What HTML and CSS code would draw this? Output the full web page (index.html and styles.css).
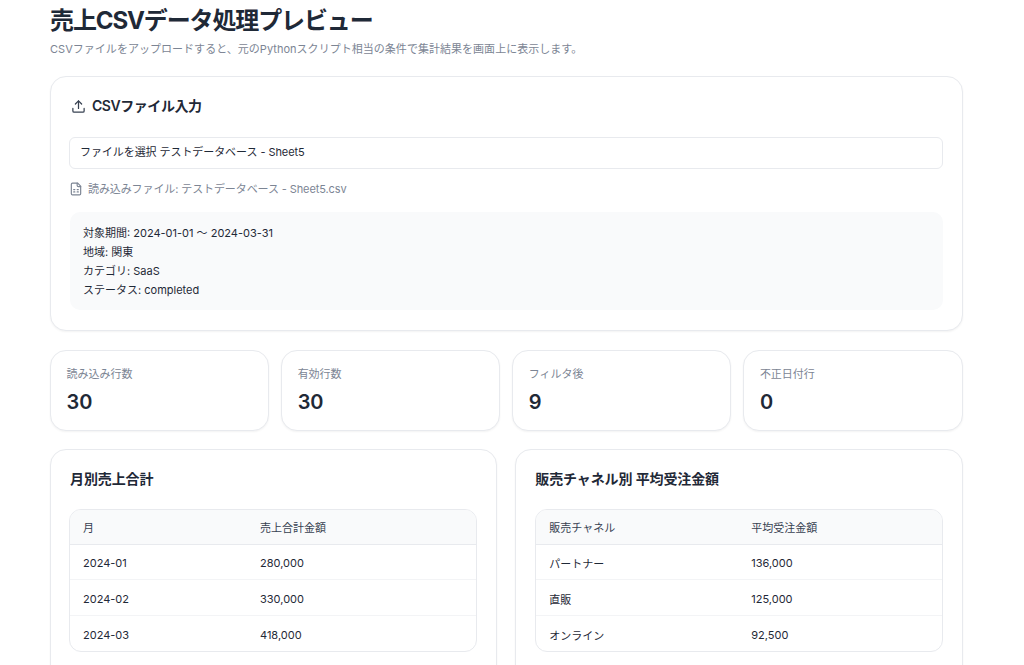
FILE: index.html
```
<!DOCTYPE html>
<html lang="ja">
<head>
<meta charset="utf-8">
<title>売上CSVデータ処理プレビュー</title>
<link rel="stylesheet" href="styles.css">
</head>
<body>
<main class="page">
  <header class="head">
    <h1 class="title">売上CSVデータ処理プレビュー</h1>
    <p class="subtitle">CSVファイルをアップロードすると、元のPythonスクリプト相当の条件で集計結果を画面上に表示します。</p>
  </header>

  <section class="card upload">
    <h2 class="card-title with-icon">
      <svg class="icon-upload" viewBox="0 0 24 24" fill="none" stroke="currentColor" stroke-width="2" stroke-linecap="round" stroke-linejoin="round"><path d="M21 15v4a2 2 0 0 1-2 2H5a2 2 0 0 1-2-2v-4"/><polyline points="17 8 12 3 7 8"/><line x1="12" y1="3" x2="12" y2="15"/></svg>
      CSVファイル入力
    </h2>
    <div class="file-input">ファイルを選択 テストデータベース - Sheet5</div>
    <p class="file-name">
      <svg class="icon-file" viewBox="0 0 24 24" fill="none" stroke="currentColor" stroke-width="2" stroke-linecap="round" stroke-linejoin="round"><path d="M15 2H6a2 2 0 0 0-2 2v16a2 2 0 0 0 2 2h12a2 2 0 0 0 2-2V7z"/><path d="M14 2v4a2 2 0 0 0 2 2h4"/><path d="M8 13h2"/><path d="M14 13h2"/><path d="M8 17h2"/><path d="M14 17h2"/></svg>
      読み込みファイル: テストデータベース - Sheet5.csv
    </p>
    <div class="conditions">
      <p>対象期間: 2024-01-01 ～ 2024-03-31</p>
      <p>地域: 関東</p>
      <p>カテゴリ: SaaS</p>
      <p>ステータス: completed</p>
    </div>
  </section>

  <section class="stats">
    <div class="card stat"><div class="stat-label">読み込み行数</div><div class="stat-value">30</div></div>
    <div class="card stat"><div class="stat-label">有効行数</div><div class="stat-value">30</div></div>
    <div class="card stat"><div class="stat-label">フィルタ後</div><div class="stat-value">9</div></div>
    <div class="card stat"><div class="stat-label">不正日付行</div><div class="stat-value">0</div></div>
  </section>

  <section class="tables">
    <div class="card panel">
      <h2 class="card-title panel-title">月別売上合計</h2>
      <div class="table-wrap">
        <table class="table monthly">
          <thead><tr><th>月</th><th>売上合計金額</th></tr></thead>
          <tbody>
            <tr><td>2024-01</td><td>280,000</td></tr>
            <tr><td>2024-02</td><td>330,000</td></tr>
            <tr><td>2024-03</td><td>418,000</td></tr>
          </tbody>
        </table>
      </div>
    </div>
    <div class="card panel panel-right">
      <h2 class="card-title panel-title">販売チャネル別 平均受注金額</h2>
      <div class="table-wrap">
        <table class="table channel">
          <thead><tr><th>販売チャネル</th><th>平均受注金額</th></tr></thead>
          <tbody>
            <tr><td>パートナー</td><td>136,000</td></tr>
            <tr><td>直販</td><td>125,000</td></tr>
            <tr><td>オンライン</td><td>92,500</td></tr>
          </tbody>
        </table>
      </div>
    </div>
  </section>
</main>
</body>
</html>
```
FILE: styles.css
```
* { box-sizing: border-box; }
html, body { margin: 0; height: 100%; overflow: hidden; background: #fff; }
body {
  font-family: Inter, "Noto Sans CJK JP", sans-serif;
  color: #1f2937;
}
p, h1, h2 { margin: 0; }

.page { width: 912.5px; margin-left: 50px; padding-top: 5px; }

.head { margin-bottom: 19px; }
.title { font-size: 24px; line-height: 32px; font-weight: 700; letter-spacing: -1.12px; color: #1f2937; }
.subtitle { margin-top: 4px; font-size: 11px; line-height: 16px; letter-spacing: 0.03px; color: #7c8594; }

.card {
  background: #fff;
  border: 1px solid #e8eaee;
  border-radius: 16px;
  box-shadow: 0 1px 2px rgba(0, 0, 0, 0.05);
}

.upload { height: 255px; padding: 19px 19px 19px 18px; }
.card-title { margin-left: 1px; font-size: 14px; line-height: 20px; font-weight: 600; color: #1f2937; }
.with-icon { display: flex; align-items: center; gap: 6px; letter-spacing: -0.45px; }
.panel-title { letter-spacing: -0.12px; }
.icon-upload { width: 15px; height: 15px; margin-left: 1px; color: #374151; }

.file-input {
  margin-top: 21px;
  height: 32px;
  padding: 0 10px;
  border: 1px solid #e8eaee;
  border-radius: 6px;
  font-size: 11px;
  line-height: 28px;
  letter-spacing: -0.07px;
  color: #1f2937;
}
.file-name {
  display: flex;
  align-items: center;
  gap: 5px;
  margin-top: 12px;
  font-size: 11px;
  line-height: 16px;
  letter-spacing: -0.1px;
  color: #7c8594;
}
.icon-file { width: 14px; height: 14px; }

.conditions {
  margin-top: 15px;
  margin-left: 1px;
  height: 98px;
  padding: 12px 13px;
  background: #f9fafb;
  border-radius: 10px;
  font-size: 11px;
  line-height: 19px;
  color: #1f2937;
}

.stats {
  display: grid;
  grid-template-columns: repeat(4, 1fr);
  gap: 12px;
  margin-top: 19px;
}
.stat { height: 81px; padding: 15px 15.5px; }
.stat-label { font-size: 11px; line-height: 16px; color: #7c8594; }
.stat-value { margin-top: 6px; font-size: 20px; line-height: 28px; font-weight: 600; color: #1f2937; }

.tables {
  display: grid;
  grid-template-columns: repeat(2, 1fr);
  gap: 18px;
  margin-top: 18px;
}
.panel { padding: 19px 19px 19px 18px; height: 240px; }
.panel-right { padding-left: 19px; }
.panel-right .card-title { margin-left: 0; }

.table-wrap {
  margin-top: 20px;
  border: 1px solid #e8eaee;
  border-radius: 12px;
  overflow: hidden;
}
.table { width: 100%; border-collapse: collapse; table-layout: fixed; font-size: 11px; color: #1f2937; }
.table th { height: 34px; padding: 0 13px; text-align: left; font-weight: 400; background: #f9fafb; color: #374151; }
.table td { height: 35.5px; padding: 2px 13px 0; }
.table thead tr { border-bottom: 1px solid #e8eaee; }
.table tbody tr + tr { border-top: 1px solid #f3f4f6; }
.table tbody tr + tr td { padding-top: 4px; }
.monthly th:first-child { width: 177px; }
.channel th:first-child { width: 202px; }
```
